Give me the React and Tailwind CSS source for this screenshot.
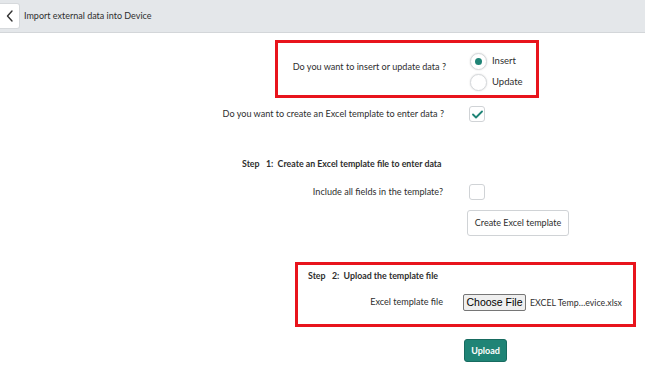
import React from "react";

const font = { fontFamily: "Lato, 'Noto Sans', sans-serif" };

function Radio({ checked, label }) {
  return (
    <div className="flex items-center h-[16px]">
      <div className="w-[17px] h-[17px] rounded-full border border-[#d6d9dc] bg-white shadow-[0_0_2px_rgba(0,0,0,0.15)] flex items-center justify-center">
        {checked && <div className="w-[7px] h-[7px] rounded-full bg-[#1f8476]" />}
      </div>
      <span className="ml-[5px] text-[9.5px] text-[#2e2e2e]">{label}</span>
    </div>
  );
}

function Checkbox({ checked }) {
  return (
    <div className="w-[16px] h-[16px] rounded-[3px] border border-[#d0d3d6] bg-white flex items-center justify-center">
      {checked && (
        <svg width="11" height="9" viewBox="0 0 11 9" fill="none">
          <path d="M1 4.5 L4 7.5 L10 1.5" stroke="#1f8476" strokeWidth="1.8" strokeLinecap="round" strokeLinejoin="round" />
        </svg>
      )}
    </div>
  );
}

export default function App() {
  return (
    <div className="relative w-[645px] h-[374px] bg-white text-[#2e2e2e] overflow-hidden" style={font}>
      <div className="h-[33px] bg-[#e4e7ea] border-b border-[#d3d6d9] flex items-center">
        <div className="w-[20px] h-[26px] bg-white border border-[#d6d9dc] border-l-0 rounded-r-[3px] flex items-center justify-center">
          <svg width="8" height="12" viewBox="0 0 8 12" fill="none">
            <path d="M6 1 L1.5 6 L6 11" stroke="#333" strokeWidth="1.4" strokeLinecap="round" strokeLinejoin="round" />
          </svg>
        </div>
        <span className="ml-[4px] text-[9px] text-[#2e2e2e]">Import external data into Device</span>
      </div>

      {/* Row 1 */}
      <div className="flex items-start mt-[20px]">
        <div className="w-[446px] text-right text-[9.1px] pt-[7px]">Do you want to insert or update data ?</div>
        <div className="ml-[24px] flex flex-col gap-[5px]">
          <Radio checked label="Insert" />
          <Radio label="Update" />
        </div>
      </div>

      {/* Row 2 */}
      <div className="flex items-center mt-[16px] h-[16px]">
        <div className="w-[444px] text-right text-[9.1px]">Do you want to create an Excel template to enter data ?</div>
        <div className="ml-[25px]">
          <Checkbox checked />
        </div>
      </div>

      {/* Step 1 */}
      <div className="mt-[35px] pl-[242px] h-[14px] leading-[14px] text-[8.8px] font-bold">
        Step&nbsp;&nbsp; 1:&nbsp; Create an Excel template file to enter data
      </div>

      <div className="flex items-center mt-[13px] h-[16px]">
        <div className="w-[443px] text-right text-[9.1px]">Include all fields in the template?</div>
        <div className="ml-[26px]">
          <Checkbox />
        </div>
      </div>

      <div className="mt-[8px] pl-[467px]">
        <button className="h-[26px] w-[102px] border border-[#d0d3d6] rounded-[3px] bg-white text-[9px] text-[#2e2e2e]" style={font}>
          Create Excel template
        </button>
      </div>

      {/* Step 2 */}
      <div className="mt-[33px] pl-[308px] h-[14px] leading-[14px] text-[8.8px] font-bold">
        Step&nbsp;&nbsp; 2:&nbsp; Upload the template file
      </div>

      <div className="flex items-center mt-[11px] h-[17px]">
        <div className="w-[443px] text-right text-[9.1px]">Excel template file</div>
        <div className="ml-[20px] flex items-center">
          <button
            className="h-[17px] w-[63px] bg-[#efefef] border border-[#767676] rounded-[2px] text-[10.5px] text-black leading-none"
            style={{ fontFamily: "'Liberation Sans', Arial, sans-serif" }}
          >
            Choose File
          </button>
          <span className="ml-[4px] text-[8.8px]">EXCEL Temp…evice.xlsx</span>
        </div>
      </div>

      <div className="mt-[25px] pl-[464px]">
        <button className="h-[23px] w-[43px] rounded-[3px] bg-[#1f8476] border border-[#176b60] text-white text-[9px] font-bold" style={font}>
          Upload
        </button>
      </div>

      {/* annotation boxes */}
      <div className="absolute left-[275px] top-[40px] w-[264px] h-[58px] border-[3px] border-[#e8141c] pointer-events-none" />
      <div className="absolute left-[295px] top-[262px] w-[341px] h-[65px] border-[3px] border-[#e8141c] pointer-events-none" />
    </div>
  );
}
